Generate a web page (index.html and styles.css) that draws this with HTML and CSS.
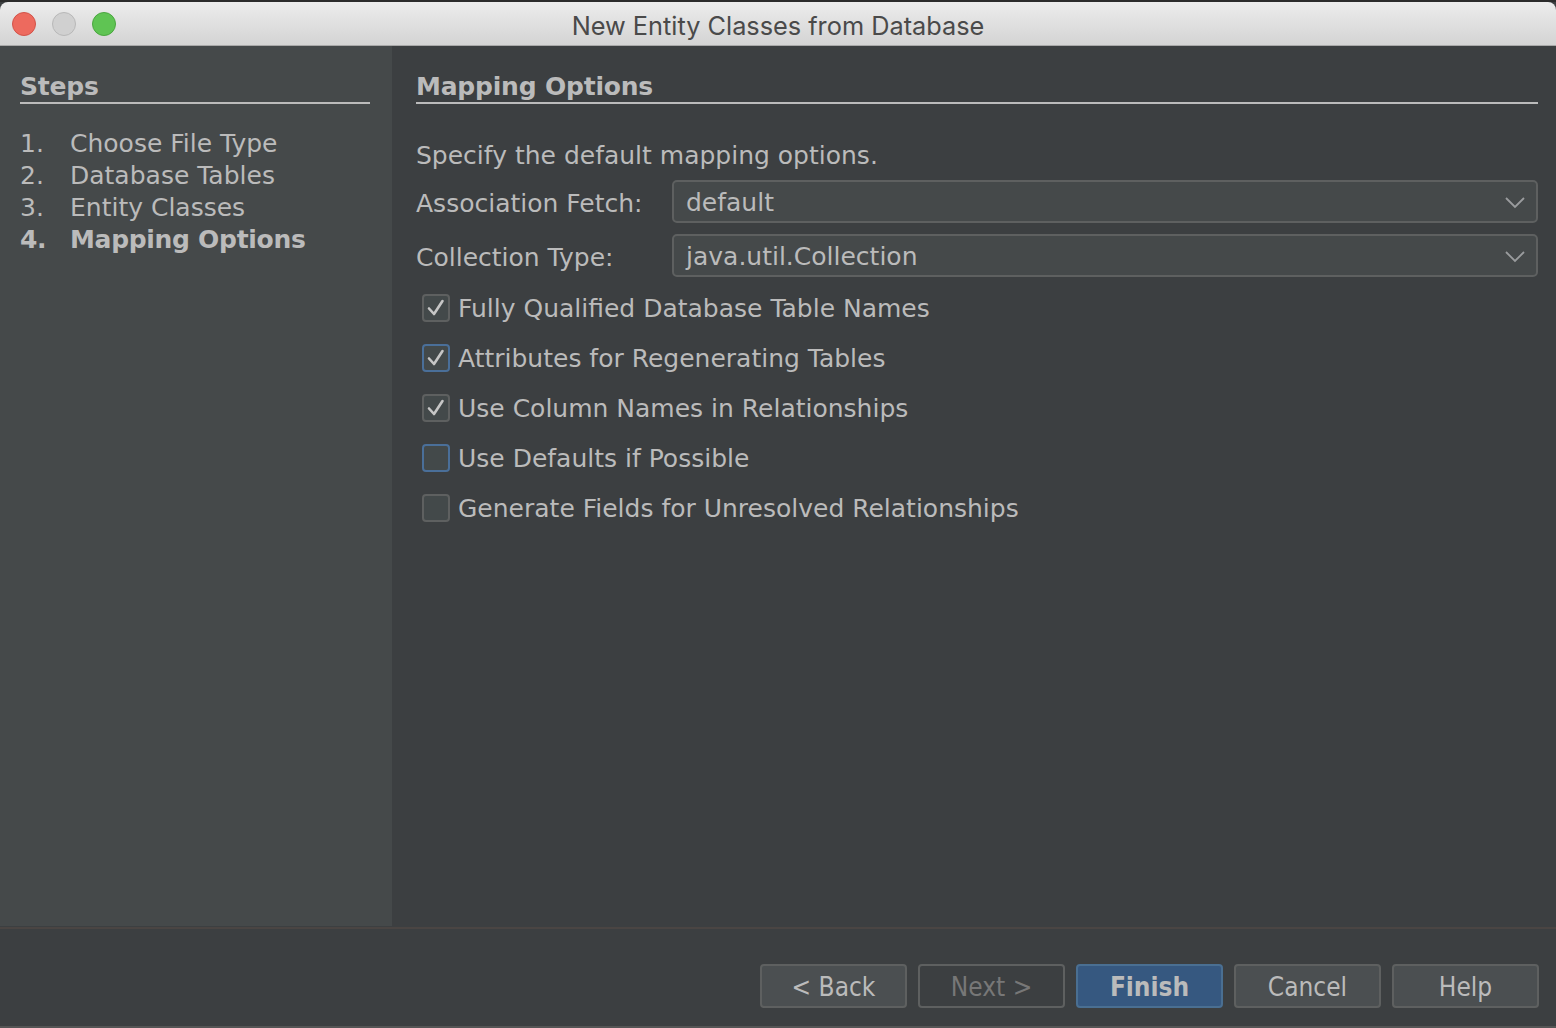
FILE: index.html
```html
<!DOCTYPE html>
<html lang="en">
<head>
<meta charset="utf-8">
<title>New Entity Classes from Database</title>
<link rel="stylesheet" href="styles.css">
</head>
<body>
<div class="window">
  <div class="topstrip"></div>
  <header class="titlebar">
    <div class="lights">
      <span class="light red"></span>
      <span class="light gray"></span>
      <span class="light green"></span>
    </div>
    <div class="title">New Entity Classes from Database</div>
  </header>
  <div class="content">
    <aside class="steps">
      <h2 class="heading">Steps</h2>
      <ol class="step-list">
        <li><span class="num">1.</span><span>Choose File Type</span></li>
        <li><span class="num">2.</span><span>Database Tables</span></li>
        <li><span class="num">3.</span><span>Entity Classes</span></li>
        <li class="current"><span class="num">4.</span><span>Mapping Options</span></li>
      </ol>
    </aside>
    <main class="panel">
      <h2 class="heading">Mapping Options</h2>
      <p class="intro">Specify the default mapping options.</p>
      <div class="form-grid">
        <label class="field-label">Association Fetch:</label>
        <div class="combo"><span>default</span>
          <svg class="chev" width="22" height="13" viewBox="0 0 22 13"><path d="M2 2 L11 11 L20 2" fill="none" stroke="#9a9c9e" stroke-width="1.8"/></svg>
        </div>
        <label class="field-label">Collection Type:</label>
        <div class="combo"><span>java.util.Collection</span>
          <svg class="chev" width="22" height="13" viewBox="0 0 22 13"><path d="M2 2 L11 11 L20 2" fill="none" stroke="#9a9c9e" stroke-width="1.8"/></svg>
        </div>
      </div>
      <ul class="checks">
        <li><span class="box"><svg width="22" height="22" viewBox="0 0 22 22"><path d="M4 11.5 L9 17 L17.5 4" fill="none" stroke="#c6c6c6" stroke-width="2.6" stroke-linecap="round" stroke-linejoin="round"/></svg></span>Fully Qualified Database Table Names</li>
        <li><span class="box focus"><svg width="22" height="22" viewBox="0 0 22 22"><path d="M4 11.5 L9 17 L17.5 4" fill="none" stroke="#c6c6c6" stroke-width="2.6" stroke-linecap="round" stroke-linejoin="round"/></svg></span>Attributes for Regenerating Tables</li>
        <li><span class="box"><svg width="22" height="22" viewBox="0 0 22 22"><path d="M4 11.5 L9 17 L17.5 4" fill="none" stroke="#c6c6c6" stroke-width="2.6" stroke-linecap="round" stroke-linejoin="round"/></svg></span>Use Column Names in Relationships</li>
        <li><span class="box focus"></span>Use Defaults if Possible</li>
        <li><span class="box"></span>Generate Fields for Unresolved Relationships</li>
      </ul>
    </main>
  </div>
  <footer class="footer">
    <button class="btn">&lt; Back</button>
    <button class="btn disabled">Next &gt;</button>
    <button class="btn primary">Finish</button>
    <button class="btn">Cancel</button>
    <button class="btn">Help</button>
  </footer>
</div>
</body>
</html>
```

FILE: styles.css
```css
* { box-sizing: border-box; }
html, body { margin: 0; padding: 0; }
body {
  width: 1556px;
  height: 1028px;
  overflow: hidden;
  background: #3c3f41;
  font-family: "DejaVu Sans", "Noto Sans", sans-serif;
  color: #bbbbbb;
}
.window {
  display: flex;
  flex-direction: column;
  height: 1028px;
}
.topstrip {
  height: 2px;
  background: #2b2b2b;
  flex: none;
}
.titlebar {
  position: relative;
  height: 44px;
  flex: none;
  display: flex;
  align-items: center;
  justify-content: center;
  background: linear-gradient(#ececec, #d4d4d4);
  border-bottom: 1px solid #a9a9a9;
  border-radius: 8px 8px 0 0;
}
.lights {
  position: absolute;
  left: 12px;
  top: 10px;
  display: flex;
  gap: 16px;
}
.light {
  width: 24px;
  height: 24px;
  border-radius: 50%;
  display: block;
}
.red { background: #ed6a5e; border: 1px solid #d25349; }
.gray { background: #d0d0d0; border: 1px solid #b8b8b8; }
.green { background: #5fc453; border: 1px solid #4aa63f; }
.title {
  font-family: "Inter", "Liberation Sans", sans-serif;
  font-size: 25.3px;
  color: #4a4a4a;
  padding-top: 3px;
}
.content {
  display: flex;
  height: 883px;
  flex: none;
  border-bottom: 2px solid #4a4543;
}
.steps {
  width: 392px;
  background: #45494a;
  padding: 26px 22px 0 20px;
  height: 880px;
}
.heading {
  margin: 0;
  font-size: 25px;
  font-weight: bold;
  line-height: 30px;
  border-bottom: 2px solid #bbbbbb;
  color: #bbbbbb;
  letter-spacing: -0.2px;
}
.step-list {
  list-style: none;
  margin: 24px 0 0 0;
  padding: 0;
  font-size: 25px;
  line-height: 32px;
}
.step-list li { display: flex; }
.step-list .num { width: 50px; flex: none; }
.step-list .current { font-weight: bold; letter-spacing: -0.3px; }
.panel {
  flex: 1;
  padding: 26px 18px 0 24px;
}
.intro {
  margin: 34px 0 0 0;
  font-size: 25px;
  line-height: 36px;
}
.form-grid {
  display: grid;
  grid-template-columns: 256px 1fr;
  row-gap: 11px;
  align-items: center;
  margin-top: 6px;
}
.field-label { font-size: 25px; padding-top: 3px; }
.combo {
  height: 43px;
  border: 2px solid #5e6060;
  border-radius: 5px;
  background: #45494a;
  display: flex;
  align-items: center;
  justify-content: space-between;
  padding: 2px 10px 0 12px;
  font-size: 25px;
}
.chev { flex: none; }
.checks {
  list-style: none;
  margin: 6px 0 0 6px;
  padding: 0;
  font-size: 25px;
}
.checks li {
  display: flex;
  align-items: center;
  height: 50px;
}
.box {
  width: 28px;
  height: 28px;
  border: 2px solid #5e6060;
  border-radius: 4px;
  background: #43494a;
  margin-right: 8px;
  display: flex;
  align-items: center;
  justify-content: center;
  flex: none;
}
.box.focus { border-color: #4a6f99; }
.footer {
  flex: 1;
  display: flex;
  justify-content: flex-end;
  align-items: flex-start;
  gap: 11px;
  padding: 35px 17px 0 0;
  border-bottom: 2px solid #555;
}
.btn {
  width: 147px;
  height: 44px;
  border: 2px solid #5e6060;
  border-radius: 4px;
  background: #4b4f51;
  color: #bbbbbb;
  font-family: "DejaVu Sans Condensed", "DejaVu Sans", sans-serif;
  font-stretch: condensed;
  font-size: 26px;
  padding: 2px 0 0 0;
}
.btn.disabled { background: #3c3f41; color: #777777; }
.btn.primary {
  background: #365880;
  border-color: #4a6f92;
  font-weight: bold;
}
```
